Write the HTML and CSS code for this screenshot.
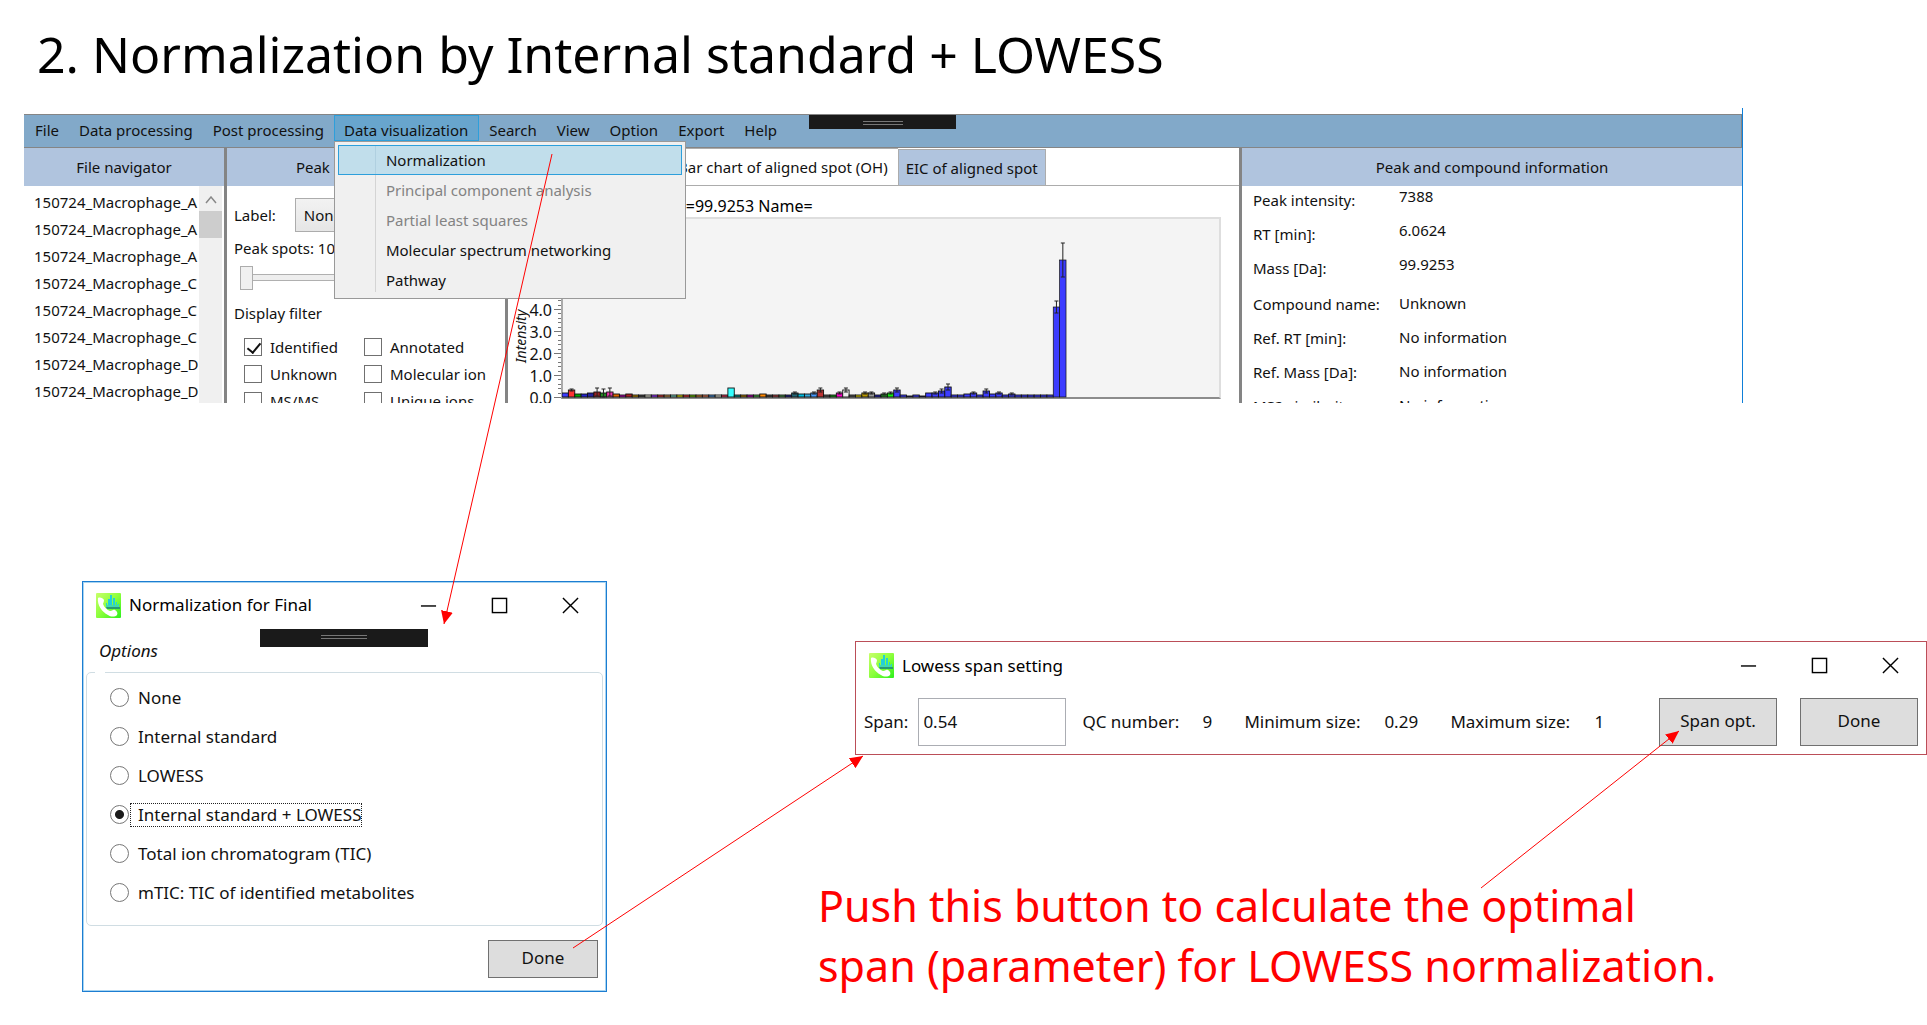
FILE: index.html
```html
<!DOCTYPE html>
<html lang="en">
<head>
<meta charset="utf-8">
<title>Normalization by Internal standard + LOWESS</title>
<link rel="stylesheet" href="styles.css">
</head>
<body>
<svg class="defs" aria-hidden="true">
  <defs>
    <linearGradient id="leaf" x1="0" y1="0" x2="1" y2="1">
      <stop offset="0" stop-color="#c8ff6a"/><stop offset=".5" stop-color="#8cff3c"/><stop offset="1" stop-color="#2cf01c"/>
    </linearGradient>
    <symbol id="app-icon" viewBox="0 0 25 25">
      <rect width="25" height="25" rx="1" fill="url(#leaf)"/>
      <path d="M10 15V10h1v5zM12 15V6h2v9zM14 15V2h2v13zM17 15V5h2v10zM20 15V9h1v6zM22 15v-4h1v4z" fill="#22cfd8"/>
      <path d="M10 12h13v3H10z" fill="#3fd8b0"/>
      <path d="M10 14h14v2H11z" fill="#2a9a70"/>
      <path d="M2 5c2-1 5 0 6 2 0 2-1 3-1 4 1 3 4 6 7 7 2 0 3-2 5-1 2 1 3 3 2 5-2 2-6 2-9 0C6 19 1 12 2 5z" fill="#fff"/>
    </symbol>
    <symbol id="win-min" viewBox="0 0 18 18"><path d="M1 9.5h16" stroke="#000" stroke-width="1.5"/></symbol>
    <symbol id="win-max" viewBox="0 0 18 18"><rect x="1.5" y="1.5" width="15" height="15" fill="none" stroke="#000" stroke-width="1.5"/></symbol>
    <symbol id="win-close" viewBox="0 0 18 18"><path d="M1 1l16 16M17 1L1 17" stroke="#000" stroke-width="1.5"/></symbol>
  </defs>
</svg>

<h1>2. Normalization by Internal standard + LOWESS</h1>

<section class="app">
  <nav class="menubar">
    <button>File</button>
    <button>Data processing</button>
    <button>Post processing</button>
    <div class="menu-open">
      <button class="active">Data visualization</button>
      <div class="dropdown">
        <button class="selected">Normalization</button>
        <button disabled>Principal component analysis</button>
        <button disabled>Partial least squares</button>
        <button>Molecular spectrum networking</button>
        <button>Pathway</button>
      </div>
    </div>
    <button>Search</button>
    <button>View</button>
    <button>Option</button>
    <button>Export</button>
    <button>Help</button>
    <div class="grip grip-app"></div>
  </nav>

  <div class="panels">
    <section class="panel">
      <h2>File navigator</h2>
      <div class="files">
        <ul>
          <li>150724_Macrophage_A</li>
          <li>150724_Macrophage_A</li>
          <li>150724_Macrophage_A</li>
          <li>150724_Macrophage_C</li>
          <li>150724_Macrophage_C</li>
          <li>150724_Macrophage_C</li>
          <li>150724_Macrophage_D</li>
          <li>150724_Macrophage_D</li>
        </ul>
        <div class="scrollbar">
          <svg width="12" height="8" viewBox="0 0 12 8"><path d="M1 7l5-6 5 6" fill="none" stroke="#888" stroke-width="1.5"/></svg>
          <div class="thumb"></div>
        </div>
      </div>
    </section>

    <section class="panel">
      <h2>Peak spot navigator</h2>
      <div class="peak">
        <div class="label-row"><label for="lab">Label:</label><select id="lab"><option>None</option></select></div>
        <label class="spots" for="spots">Peak spots: 10</label>
        <input id="spots" type="range" min="0" max="100" value="0">
        <p>Display filter</p>
        <div class="filters">
          <label><input type="checkbox" checked>Identified</label>
          <label><input type="checkbox">Annotated</label>
          <label><input type="checkbox">Unknown</label>
          <label><input type="checkbox">Molecular ion</label>
          <label><input type="checkbox">MS/MS</label>
          <label><input type="checkbox">Unique ions</label>
        </div>
      </div>
    </section>

    <section class="panel">
      <div class="tabs">
        <button class="current">Bar chart of aligned spot (OH)</button>
        <button>EIC of aligned spot</button>
      </div>
      <div class="chart">
        <div class="chart-title">Mass=99.9253 Name=</div>
        <div class="chart-body">
          <div class="axis-name">Intensity</div>
          <ol class="ticks"><li>4.0</li><li>3.0</li><li>2.0</li><li>1.0</li><li>0.0</li></ol>
          <svg class="scale" width="9" height="188" id="scale"></svg>
          <div class="plot"><svg id="bars" width="520" height="182"></svg></div>
        </div>
      </div>
    </section>

    <section class="panel">
      <h2>Peak and compound information</h2>
      <dl class="measured">
        <dt>Peak intensity:</dt><dd>7388</dd>
        <dt>RT [min]:</dt><dd>6.0624</dd>
        <dt>Mass [Da]:</dt><dd>99.9253</dd>
      </dl>
      <dl class="reference">
        <dt>Compound name:</dt><dd>Unknown</dd>
        <dt>Ref. RT [min]:</dt><dd>No information</dd>
        <dt>Ref. Mass [Da]:</dt><dd>No information</dd>
        <dt>MS2 similarity:</dt><dd>No information</dd>
      </dl>
    </section>
  </div>
</section>

<div class="stage">
  <section class="dialog">
    <header class="titlebar">
      <svg class="logo"><use href="#app-icon"/></svg>
      <h3>Normalization for Final</h3>
      <button aria-label="Minimize"><svg><use href="#win-min"/></svg></button>
      <button aria-label="Maximize"><svg><use href="#win-max"/></svg></button>
      <button aria-label="Close"><svg><use href="#win-close"/></svg></button>
    </header>
    <div class="grip grip-dialog"></div>
    <p class="caption">Options</p>
    <div class="group">
      <label><input type="radio" name="norm"><span>None</span></label>
      <label><input type="radio" name="norm"><span>Internal standard</span></label>
      <label><input type="radio" name="norm"><span>LOWESS</span></label>
      <label><input type="radio" name="norm" checked><span>Internal standard + LOWESS</span></label>
      <label><input type="radio" name="norm"><span>Total ion chromatogram (TIC)</span></label>
      <label><input type="radio" name="norm"><span>mTIC: TIC of identified metabolites</span></label>
    </div>
    <div class="actions"><button class="push">Done</button></div>
  </section>

  <div class="side">
    <section class="lowess">
      <header class="titlebar">
        <svg class="logo"><use href="#app-icon"/></svg>
        <h3>Lowess span setting</h3>
        <button aria-label="Minimize"><svg><use href="#win-min"/></svg></button>
        <button aria-label="Maximize"><svg><use href="#win-max"/></svg></button>
        <button aria-label="Close"><svg><use href="#win-close"/></svg></button>
      </header>
      <div class="span-row">
        <label for="span">Span:</label>
        <input id="span" type="text" value="0.54">
        <div class="facts">
          <span>QC number:</span><span>9</span>
          <span>Minimum size:</span><span>0.29</span>
          <span>Maximum size:</span><span>1</span>
        </div>
        <button class="push">Span opt.</button>
        <button class="push">Done</button>
      </div>
    </section>
    <p class="note">Push this button to calculate the optimal<br>span (parameter) for LOWESS normalization.</p>
  </div>
</div>

<svg class="arrows" width="1720" height="960" aria-hidden="true">
  <defs>
    <marker id="head" markerUnits="userSpaceOnUse" markerWidth="13" markerHeight="12" refX="13" refY="6" orient="auto"><path d="M0 0l13 6-13 6z" fill="#f00"/></marker>
  </defs>
  <g stroke="#f00">
    <path d="M552 154L444 624" marker-end="url(#head)"/>
    <path d="M573 948L863 756" marker-end="url(#head)"/>
    <path d="M1481 888L1679 731" marker-end="url(#head)"/>
  </g>
</svg>
<script src="chart.js"></script>
</body>
</html>
```

FILE: styles.css
```css
* { box-sizing: border-box; }
body {
  margin: 0;
  background: #fff;
  color: #111;
  font: 15px/20px "Noto Sans", "Open Sans", sans-serif;
  position: relative;
}
h1, h2, h3, p, ul, ol, dl, dd { margin: 0; padding: 0; font-weight: 400; list-style: none; }
button, input, select { font: inherit; color: inherit; margin: 0; }
svg { display: block; }
.defs { position: absolute; width: 0; height: 0; }

h1 { padding: 20px 37px; font-size: 50px; line-height: 68px; color: #000; }

/* application window, cropped at the bottom */
.app {
  height: 295px;
  margin: 0 184px 0 24px;
  padding-top: 6px;
  border-right: 1px solid #0f7fd8;
  overflow: hidden;
}
.menubar {
  position: relative;
  display: flex;
  height: 34px;
  padding-left: 1px;
  background: #82a9c9;
  border: solid #858585;
  border-width: 1px 1px 1px 0;
}
.menubar button {
  height: 26px;
  padding: 0 9px;
  border: 1px solid transparent;
  background: none;
  line-height: 20px;
  white-space: nowrap;
}
.menubar > button { padding-top: 3px; }
.menu-open { position: relative; z-index: 2; }
.menubar .active { padding: 3px 10px 0 9px; background: #68a5cd; border-color: #2d9fdb; }
.dropdown {
  position: absolute;
  top: 26px;
  left: 0;
  width: 352px;
  padding: 3px;
  background: linear-gradient(#d4d4d4, #d4d4d4) 40px 6px / 1px 144px no-repeat #f0f0f0;
  border: 1px solid #999;
}
.dropdown button { display: block; width: 100%; height: 30px; padding: 0 0 0 47px; text-align: left; }
.dropdown .selected { background: linear-gradient(#b0d0e0, #b0d0e0) 36px 0 / 1px 100% no-repeat #c1deeb; border-color: #2d9fdb; }
.dropdown button:disabled { color: #838383; }

.grip {
  position: absolute;
  background:
    linear-gradient(#777, #777) 50% 6px / 46px 1px no-repeat,
    linear-gradient(#777, #777) 50% 9px / 46px 1px no-repeat,
    #1a1a1a;
}
.grip-app { left: 785px; top: 0; width: 147px; height: 14px; background-size: 40px 1px, 40px 1px, auto; }
.grip-dialog { left: 177px; top: 47px; width: 168px; height: 18px; }

.panels { display: grid; grid-template-columns: 203px 281px 1fr 500px; }
.panel { height: 260px; border-right: 3px solid #848484; min-width: 0; overflow: hidden; }
.panel:last-child { border-right: 0; }
.panel h2 { height: 38px; background: #b0c4de; font-size: 15px; line-height: 38px; text-align: center; }

.files { display: flex; }
.files ul { flex: 1; min-width: 0; padding: 3px 0 0 10px; overflow: hidden; line-height: 27px; white-space: nowrap; }
.scrollbar { width: 23px; height: 222px; margin-right: 2px; padding-top: 10px; background: #f0f0f0; }
.scrollbar svg { margin: 0 auto 7px; }
.thumb { height: 27px; background: #cdcdcd; }

.peak { padding: 12px 0 0 7px; }
.label-row { display: flex; gap: 19px; align-items: center; height: 34px; }
.label-row select { width: 180px; height: 34px; padding: 0 8px; appearance: none; border: 1px solid #acacac; border-radius: 0; background: linear-gradient(#f2f2f2, #e6e6e6); }
.spots { display: block; margin-top: 6px; }
.peak input[type=range] { display: block; appearance: none; width: 250px; height: 24px; margin: 8px 0 0 6px; background: linear-gradient(#b0b0b0, #b0b0b0) 0 8px / 100% 1px no-repeat, linear-gradient(#b0b0b0, #b0b0b0) 0 14px / 100% 1px no-repeat, linear-gradient(#eee, #eee) 0 9px / 100% 5px no-repeat; }
.peak input[type=range]::-webkit-slider-thumb { appearance: none; width: 13px; height: 24px; background: #f0f0f0; border: 1px solid #acacac; }
.peak p { margin-top: 13px; }
.filters { display: grid; grid-template-columns: 120px 1fr; padding: 10px 0 0 10px; }
.filters label { display: flex; align-items: center; gap: 8px; height: 27px; }
.filters input { appearance: none; position: relative; width: 18px; height: 18px; border: 1px solid #707070; background: #fff; }
.filters input:checked::after { content: ""; position: absolute; left: 5px; top: 1px; width: 6px; height: 11px; border: solid #111; border-width: 0 2px 2px 0; transform: rotate(40deg); }

.tabs { display: flex; align-items: flex-end; height: 38px; padding-left: 160px; border-bottom: 1px solid #acacac; }
.tabs button { height: 36px; padding: 0 7px; border: 1px solid #acacac; border-bottom: 0; background: #b0c4de; }
.tabs .current { height: 37px; padding: 0 10px; background: #fff; border: 0; border-top: 1px solid #acacac; }
.chart { padding: 9px 18px 0 5px; }
.chart-title { padding-left: 134px; font-size: 16px; line-height: 22px; color: #000; }
.chart-body { display: flex; }
.axis-name { width: 16px; height: 63px; margin-top: 83px; writing-mode: vertical-rl; transform: rotate(180deg); font-size: 14px; line-height: 16px; font-style: italic; text-align: left; }
.ticks { width: 23px; padding-top: 82px; line-height: 22px; text-align: right; font-size: 16px; }
.plot { flex: 1; height: 182px; background: #f4f4f4; border: 2px solid #dedede; border-bottom: 2px solid #8c8c8c; border-left: 2px solid #aaa; }
.plot svg { margin-top: -2px; margin-left: -1px; }

dl { display: grid; grid-template-columns: 146px 1fr; grid-auto-rows: 34px; padding-left: 11px; }
dt { padding-top: 4px; }
.reference { margin-top: 2px; }
.reference dd { padding-top: 3px; }

/* dialogs */
.stage { display: flex; align-items: flex-start; padding: 178px 0 0 82px; font-size: 17px; line-height: 24px; }
.dialog { position: relative; width: 525px; height: 411px; border: 1px solid #1c7dd2; box-shadow: inset 0 0 0 1px #a8d4f0; flex: none; }
.titlebar { display: flex; align-items: center; height: 46px; padding-left: 13px; }
.logo { width: 25px; height: 25px; }
.titlebar h3 { flex: 1; padding-left: 8px; font-size: 17px; color: #000; }
.titlebar button { width: 71px; height: 40px; padding: 0; border: 0; background: none; }
.titlebar button svg { width: 17px; height: 17px; margin: 0 auto; }
.caption { padding: 11px 0 0 16px; font-size: 17px; font-style: italic; }
.group {
  position: relative;
  margin: 9px 3px 0;
  padding: 5px 0 13px 23px;
  border: 1px solid #d0dde3;
  border-radius: 5px;
}
.group::before { content: ""; position: absolute; left: 8px; top: -1px; width: 10px; height: 1px; background: #fff; }
.group label { display: flex; align-items: center; height: 39px; gap: 1px; }
.group span { padding: 0 0 0 7px; border: 1px dotted transparent; line-height: 22px; }
.group input { appearance: none; width: 19px; height: 19px; border: 1px solid #777; border-radius: 50%; background: #fff; }
.group input:checked { background: radial-gradient(circle, #1c1c1c 4px, #fff 5px); }
.group input:checked + span { border-color: #222; }
.actions { display: flex; justify-content: flex-end; padding: 14px 8px 0 0; }
.push { height: 38px; padding: 0 0 2px; width: 110px; border: 1px solid #707070; background: #ddd; }

.side { flex: 1; min-width: 0; padding: 60px 0 0 248px; }
.lowess { height: 114px; border: 1px solid #bb4e58; }
.lowess .titlebar { height: 47px; }
.span-row { display: flex; align-items: center; padding: 9px 8px 0 8px; }
.span-row input { width: 148px; height: 48px; margin-left: 10px; padding: 0 4px 2px; border: 1px solid #abadb3; border-radius: 0; background: #fff; }
.facts { flex: 1; display: grid; grid-template-columns: 120px 42px 140px 66px 144px 1fr; padding-left: 16px; white-space: nowrap; }
.span-row .push { width: 118px; height: 48px; margin-left: 23px; }
.note { margin: 121px 0 0 -37px; font-size: 43px; line-height: 60px; color: #f00; white-space: nowrap; }

.arrows { position: absolute; left: 0; top: 0; pointer-events: none; z-index: 5; }
```

FILE: chart.js
```js
const NS = 'http://www.w3.org/2000/svg';
const add = (parent, name, attrs) => {
  const el = document.createElementNS(NS, name);
  for (const key in attrs) el.setAttribute(key, attrs[key]);
  parent.appendChild(el);
};

// One entry per sample: [height, colour, error half-length]
const B = '#3c3cff';
const samples = [
  [4, B], [7, '#f33', 1], [3, '#0a0'], [3, '#22c'], [4, '#229', 0], [5, '#922', 4], [4, '#282', 4], [5, '#e3a', 4],
  [3, '#d60'], [2, '#a0a'], [3, '#a22'], [2, '#b80'], [2, '#444'], [2, '#ddc'], [2, '#93f'],
  [2, '#c33'], [2, '#b84'], [2, '#7cb'], [2, '#dd0'], [2, '#d33'], [2, '#6b0'], [2, '#c73'],
  [2, '#d75'], [2, '#48c'], [2, '#ddc'], [2, '#d35'], [9, '#3ff'], [2, '#088'], [2, '#a70'], [2, '#a0a'], [2, '#4a4'],
  [3, '#f80'], [2, '#444'], [2, '#a44'], [2, '#484'], [2, '#228'], [4, '#267', 1], [3, '#0bd'], [3, '#3ad'], [4, '#49f', 1],
  [7, '#b33', 2], [2, '#555'], [2, '#191'], [4, '#f0c', 1], [7, '#eee', 2], [2, '#555'], [2, '#dc0'], [4, '#b90', 1], [4, '#999', 1],
  [2, '#22a'], [3, '#282', 1], [4, '#1e1', 1], [7, B, 2], [2, B], [1, B], [2, B], [1, B], [4, B], [4, B, 1], [6, B, 2],
  [10, B, 3], [2, B], [2, B], [3, B], [4, B, 1], [2, B], [6, B, 2], [3, B], [4, B, 1], [2, B], [3, B, 1],
  [2, B], [2, B], [2, B], [2, B], [2, B], [2, B],
  [90, B, 6], [137, B, 17]
];

const bars = document.getElementById('bars');
const base = 180;
const step = 6.38;
samples.forEach(([h, fill, err], i) => {
  const x = i * step;
  add(bars, 'rect', { x, y: base - h, width: step, height: h, fill, stroke: '#111', 'stroke-width': i > 76 ? 0.7 : 0.9 });
  if (err) {
    const mid = x + step / 2;
    const low = Math.min(base, base - h + err);
    add(bars, 'path', {
      d: `M${mid} ${base - h - err}V${low}M${mid - 2} ${base - h - err}h4M${mid - 2} ${low}h4`,
      stroke: '#222', fill: 'none'
    });
  }
});

const scale = document.getElementById('scale');
for (let i = 0; i < 25; i++) {
  const y = Math.round(180 - i * 4.4) + 0.5;
  add(scale, 'path', { d: i % 5 ? `M6 ${y}h3` : `M2 ${y}h7`, stroke: '#777' });
}
```
